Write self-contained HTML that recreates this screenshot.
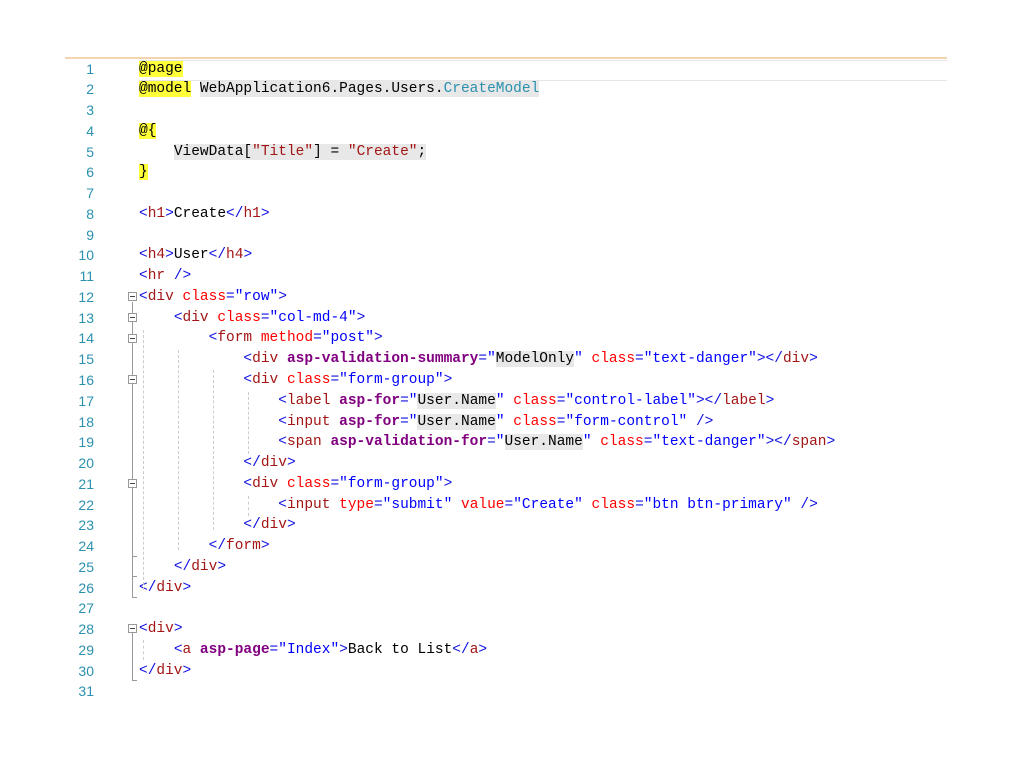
<!DOCTYPE html>
<html><head><meta charset="utf-8"><style>
body{margin:0;width:1024px;height:767px;background:#fff;position:relative;overflow:hidden;font-family:"Liberation Mono",monospace;}
.top{position:absolute;left:65px;top:57px;width:882px;height:2px;background:#f3d4b0;}
.cur{position:absolute;left:139px;top:60px;width:808px;height:19px;border:1px solid #e6e6e6;border-left:none;border-right:none;}
.code{position:absolute;left:0;top:58.5px;font-size:14.5px;line-height:20.77px;white-space:pre;color:#000;}
.ln{position:absolute;left:0;top:0;width:94px;text-align:right;color:#2b91af;font-family:"Liberation Sans",sans-serif;font-size:14px;}
.tx{position:absolute;left:139px;top:0;}
.b{color:#1010e0}.t{color:#a31515}.a{color:#ff0000}.p{color:#800080;font-weight:bold}.s{color:#0000ff}
.y{background:#ffff3a}.g{background:#e8e8e8}.c{color:#2b91af}
.fold{position:absolute;left:128px;width:9px;height:9px;border:1px solid #999;background:#fff;box-sizing:border-box;}
.fold:after{content:"";position:absolute;left:1px;top:3px;width:5px;height:1px;background:#444;}
.vl{position:absolute;left:132px;width:1px;background:#999;}
.tk{position:absolute;left:132px;width:5px;height:1px;background:#999;}
.ig{position:absolute;width:0;border-left:1px dashed #ccc;}
</style></head><body>
<div class="top"></div>
<div class="cur"></div>
<div class="code"><div class="ln">1
2
3
4
5
6
7
8
9
10
11
12
13
14
15
16
17
18
19
20
21
22
23
24
25
26
27
28
29
30
31</div><div class="tx"><span class="y">@page</span>
<span class="y">@model</span> <span class="g">WebApplication6.Pages.Users.<span class="c">CreateModel</span></span>

<span class="y">@{</span>
    <span class="g">ViewData[<span class="t">"Title"</span>] = <span class="t">"Create"</span>;</span>
<span class="y">}</span>

<span class="b">&lt;</span><span class="t">h1</span><span class="b">&gt;</span>Create<span class="b">&lt;/</span><span class="t">h1</span><span class="b">&gt;</span>

<span class="b">&lt;</span><span class="t">h4</span><span class="b">&gt;</span>User<span class="b">&lt;/</span><span class="t">h4</span><span class="b">&gt;</span>
<span class="b">&lt;</span><span class="t">hr</span> <span class="b">/&gt;</span>
<span class="b">&lt;</span><span class="t">div</span> <span class="a">class</span><span class="b">=</span><span class="s">"row"</span><span class="b">&gt;</span>
    <span class="b">&lt;</span><span class="t">div</span> <span class="a">class</span><span class="b">=</span><span class="s">"col-md-4"</span><span class="b">&gt;</span>
        <span class="b">&lt;</span><span class="t">form</span> <span class="a">method</span><span class="b">=</span><span class="s">"post"</span><span class="b">&gt;</span>
            <span class="b">&lt;</span><span class="t">div</span> <span class="p">asp-validation-summary</span><span class="b">=</span><span class="s">"</span><span class="g">ModelOnly</span><span class="s">"</span> <span class="a">class</span><span class="b">=</span><span class="s">"text-danger"</span><span class="b">&gt;&lt;/</span><span class="t">div</span><span class="b">&gt;</span>
            <span class="b">&lt;</span><span class="t">div</span> <span class="a">class</span><span class="b">=</span><span class="s">"form-group"</span><span class="b">&gt;</span>
                <span class="b">&lt;</span><span class="t">label</span> <span class="p">asp-for</span><span class="b">=</span><span class="s">"</span><span class="g">User.Name</span><span class="s">"</span> <span class="a">class</span><span class="b">=</span><span class="s">"control-label"</span><span class="b">&gt;&lt;/</span><span class="t">label</span><span class="b">&gt;</span>
                <span class="b">&lt;</span><span class="t">input</span> <span class="p">asp-for</span><span class="b">=</span><span class="s">"</span><span class="g">User.Name</span><span class="s">"</span> <span class="a">class</span><span class="b">=</span><span class="s">"form-control"</span> <span class="b">/&gt;</span>
                <span class="b">&lt;</span><span class="t">span</span> <span class="p">asp-validation-for</span><span class="b">=</span><span class="s">"</span><span class="g">User.Name</span><span class="s">"</span> <span class="a">class</span><span class="b">=</span><span class="s">"text-danger"</span><span class="b">&gt;&lt;/</span><span class="t">span</span><span class="b">&gt;</span>
            <span class="b">&lt;/</span><span class="t">div</span><span class="b">&gt;</span>
            <span class="b">&lt;</span><span class="t">div</span> <span class="a">class</span><span class="b">=</span><span class="s">"form-group"</span><span class="b">&gt;</span>
                <span class="b">&lt;</span><span class="t">input</span> <span class="a">type</span><span class="b">=</span><span class="s">"submit"</span> <span class="a">value</span><span class="b">=</span><span class="s">"Create"</span> <span class="a">class</span><span class="b">=</span><span class="s">"btn btn-primary"</span> <span class="b">/&gt;</span>
            <span class="b">&lt;/</span><span class="t">div</span><span class="b">&gt;</span>
        <span class="b">&lt;/</span><span class="t">form</span><span class="b">&gt;</span>
    <span class="b">&lt;/</span><span class="t">div</span><span class="b">&gt;</span>
<span class="b">&lt;/</span><span class="t">div</span><span class="b">&gt;</span>

<span class="b">&lt;</span><span class="t">div</span><span class="b">&gt;</span>
    <span class="b">&lt;</span><span class="t">a</span> <span class="p">asp-page</span><span class="b">=</span><span class="s">"Index"</span><span class="b">&gt;</span>Back to List<span class="b">&lt;/</span><span class="t">a</span><span class="b">&gt;</span>
<span class="b">&lt;/</span><span class="t">div</span><span class="b">&gt;</span></div></div>
<div class="vl" style="top:302px;height:296px"></div>
<div class="tk" style="top:597px"></div>
<div class="tk" style="top:556px"></div>
<div class="tk" style="top:576px"></div>
<div class="fold" style="top:292px"></div>
<div class="fold" style="top:313px"></div>
<div class="fold" style="top:334px"></div>
<div class="fold" style="top:375px"></div>
<div class="fold" style="top:479px"></div>
<div class="vl" style="top:633px;height:48px"></div>
<div class="tk" style="top:680px"></div>
<div class="fold" style="top:624px"></div>
<div class="ig" style="left:143px;top:330px;height:260px"></div>
<div class="ig" style="left:178px;top:350px;height:200px"></div>
<div class="ig" style="left:213px;top:370px;height:160px"></div>
<div class="ig" style="left:248px;top:392px;height:62px"></div>
<div class="ig" style="left:248px;top:496px;height:20px"></div>
<div class="ig" style="left:143px;top:640px;height:20px"></div>
</body></html>
